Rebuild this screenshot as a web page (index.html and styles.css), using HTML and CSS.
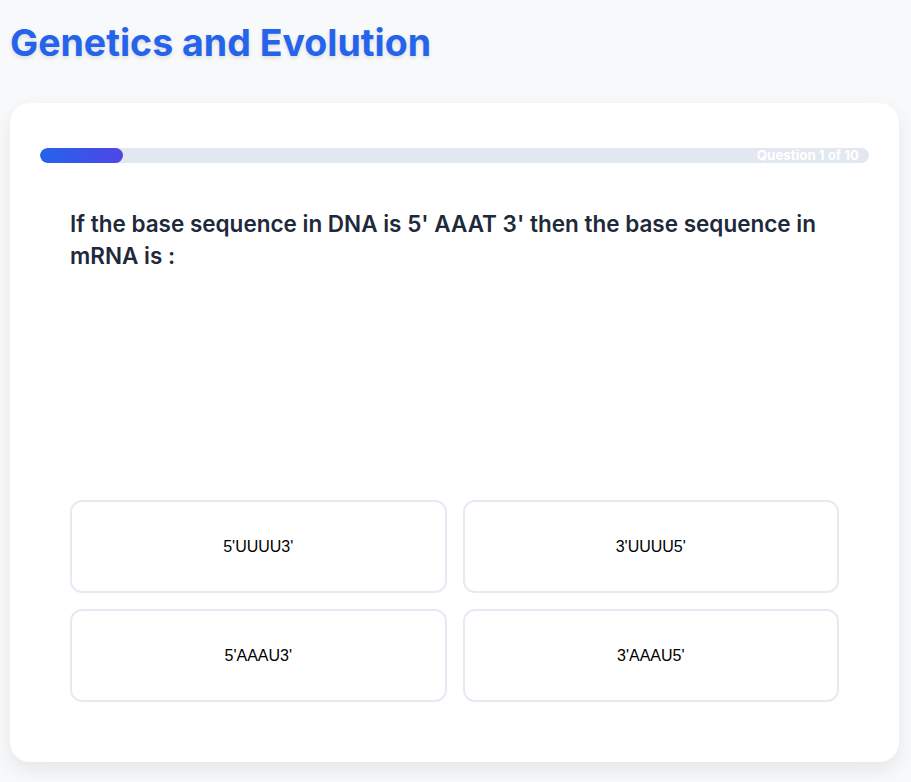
FILE: index.html
```html
<!DOCTYPE html>
<html lang="en">
<head>
<meta charset="utf-8">
<title>Genetics and Evolution</title>
<link rel="stylesheet" href="styles.css">
</head>
<body>
  <h1 class="title">Genetics and Evolution</h1>
  <main class="card">
    <div class="progress">
      <div class="progress-fill" style="width: 10%"></div>
      <span class="progress-label">Question 1 of 10</span>
    </div>
    <section class="quiz">
      <p class="question">If the base sequence in DNA is 5' AAAT 3' then the base sequence in mRNA is :</p>
      <div class="options">
        <button class="option">5'UUUU3'</button>
        <button class="option">3'UUUU5'</button>
        <button class="option">5'AAAU3'</button>
        <button class="option">3'AAAU5'</button>
      </div>
    </section>
  </main>
</body>
</html>
```
FILE: styles.css
```css
html, body {
  margin: 0;
  padding: 0;
}
body {
  background: #f8f9fb;
  font-family: Inter, "Noto Sans", sans-serif;
  padding: 0 12px 19px 10px;
}
.title {
  margin: 0;
  padding: 20px 0 0 0;
  height: 103px;
  box-sizing: border-box;
  font-size: 37.5px;
  font-weight: 700;
  line-height: 46px;
  color: #2563eb;
  text-shadow: 0 2px 4px rgba(0, 0, 0, 0.12);
}
.card {
  background: #ffffff;
  border-radius: 20px;
  box-shadow: 0 8px 20px rgba(0, 0, 0, 0.08);
  padding: 45px 30px 60px 30px;
}
.progress {
  position: relative;
  height: 15px;
  border-radius: 8px;
  background: #e2e8f0;
  overflow: hidden;
}
.progress-fill {
  height: 100%;
  border-radius: 8px;
  background: linear-gradient(90deg, #2563eb, #4f46e5);
}
.progress-label {
  position: absolute;
  right: 10px;
  top: 0;
  line-height: 15px;
  font-size: 13.3px;
  font-weight: 700;
  color: #ffffff;
}
.quiz {
  padding: 0 30px;
}
.question {
  margin: 0;
  padding-top: 45px;
  min-height: 337px;
  box-sizing: border-box;
  font-size: 22.5px;
  font-weight: 600;
  line-height: 32px;
  color: #1e293b;
}
.options {
  display: grid;
  grid-template-columns: 1fr 1fr;
  gap: 16px;
}
.option {
  height: 93px;
  background: #ffffff;
  border: 2px solid #e6eaf2;
  border-radius: 12px;
  font-family: "Liberation Sans", Arial, sans-serif;
  font-size: 16px;
  color: #000000;
  cursor: pointer;
}
```
